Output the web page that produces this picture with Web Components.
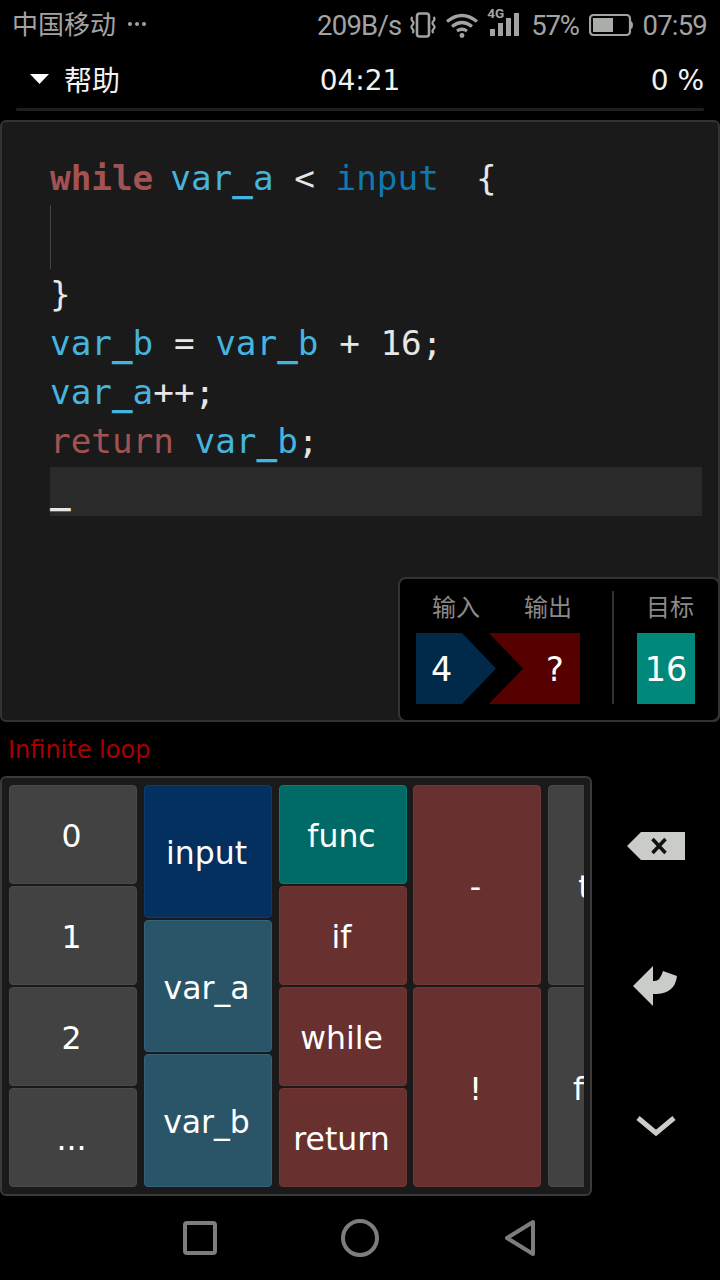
<!DOCTYPE html>
<html lang="zh"><head><meta charset="utf-8"><title>Code game</title>
<style>
html,body{margin:0;padding:0;background:#000;}
body{width:720px;height:1280px;overflow:hidden;display:flex;flex-direction:column;font-family:"DejaVu Sans","Noto Sans CJK SC",sans-serif;color:#fff;}
</style></head><body>
<status-bar></status-bar>
<top-header></top-header>
<code-editor></code-editor>
<error-line>Infinite loop</error-line>
<div style="display:flex;height:420px">
  <key-palette></key-palette>
  <side-actions></side-actions>
</div>
<nav-bar></nav-bar>
<script>
function def(name, html){
  customElements.define(name, class extends HTMLElement{
    constructor(){super();this.attachShadow({mode:'open'}).innerHTML=html;}
  });
}
def('status-bar',`<style>
:host{display:flex;align-items:center;height:50px;flex:none;box-sizing:border-box;padding:0 13px 0 13px;color:#a3a3a3;font:27.5px Roboto,"Noto Sans CJK SC",sans-serif;letter-spacing:-.8px}
.c{font:26px/26px "Noto Sans CJK SC",sans-serif;letter-spacing:0;margin-top:-4px;margin-left:-1px}
.d{margin-left:12px;display:flex;gap:3px;margin-top:-2px}
.d i{width:4px;height:4px;border-radius:50%;background:#a3a3a3;display:block}
.sp{flex:1}
svg{display:block;flex:none}
</style>
<span class="c">中国移动</span><span class="d"><i></i><i></i><i></i></span><span class="sp"></span>
<span>209B/s</span>
<svg style="margin-left:9px" width="26" height="26" viewBox="0 0 26 26" fill="none" stroke="#a3a3a3"><rect x="7" y="1.500" width="12" height="23" rx="2.500" stroke-width="2.600"/><path d="M2.500 5q-2 2 0 4t0 4 0 4 0 4M23.500 5q2 2 0 4t0 4 0 4 0 4" stroke-width="2.200"/></svg>
<svg style="margin-left:9px" width="34" height="26" viewBox="0 0 34 26" fill="none" stroke="#a3a3a3" stroke-width="3.200"><path d="M2 9.500q15-12 30 0M7 14.500q10-8 20 0M12 19q5-3.500 10 0"/><circle cx="17" cy="23.500" r="2.400" fill="#a3a3a3" stroke="none"/></svg>
<span style="margin-left:8px;position:relative;width:33px;height:36px;display:block;flex:none;letter-spacing:0">
<span style="position:absolute;left:0;top:0;font:bold 13.500px/12px Roboto,sans-serif">4G</span>
<svg style="position:absolute;left:0;top:0" width="33" height="36" viewBox="0 0 33 36" fill="#a3a3a3"><rect x="3" y="22" width="5" height="7"/><rect x="11" y="16" width="5" height="13"/><rect x="19" y="11" width="5" height="18"/><rect x="27" y="6" width="5" height="23"/></svg></span>
<span style="margin-left:11px;letter-spacing:-1.300px">57%</span>
<svg style="margin-left:10px" width="44" height="24" viewBox="0 0 44 24"><rect x="1" y="2" width="40" height="20" rx="3.500" fill="none" stroke="#a3a3a3" stroke-width="2.200"/><rect x="4" y="5" width="20" height="14" fill="#a9aea8"/><path d="M42 8q2 1 2 4t-2 4z" fill="#a3a3a3"/></svg>
<span style="margin-left:10px">07:59</span>`);
def('top-header',`<style>
:host{display:block;flex:none;height:70px;box-sizing:border-box;padding:0 16px}
.r{height:58px;display:grid;grid-template-columns:1fr auto 1fr;align-items:center;font:28px "DejaVu Sans","Noto Sans CJK SC",sans-serif;color:#f2f2f2}
.n{padding-top:2px}
.l{display:flex;align-items:center;gap:15px;padding-left:14px}
.l span{font:28px "Noto Sans CJK SC",sans-serif}
.p{text-align:right}
.bar{height:3px;background:#1f1f1f;border-radius:2px}
svg{display:block}
</style><div class="r"><div class="l"><svg width="19" height="10" viewBox="0 0 19 10"><path d="M0 0h19L9.500 10z" fill="#fff"/></svg><span>帮助</span></div><div class="n">04:21</div><div class="p n">0 %</div></div><div class="bar"></div>`);
def('code-editor',`<style>
:host{display:block;flex:none;position:relative;height:602px;box-sizing:border-box;background:#1a1a1a;border:2px solid #333;border-radius:6px;padding:33px 16px 0 48px;font:34.3px/47px "DejaVu Sans Mono",monospace;color:#e6e6e6}
.ln{height:49px;white-space:pre}
.ln:first-of-type{height:50px}
.k{color:#a25252}.v{color:#45b4de}.i{color:#0e79b2}
.u{text-shadow:0 1px 0 currentColor,0 -1px 0 currentColor}
.w{font-weight:bold;margin-right:-3.600px}
.sh{margin-left:-4px}
.blk{height:64px;border-left:1px solid #444;margin-bottom:2px}
.cur{background:#2a2a2a}
</style>
<div class="ln"><span class="k w">while</span> <span class="v">var<span class="u">_</span>a</span> &lt; <span class="i">input</span>  <span class="sh">{</span></div>
<div class="blk"></div>
<div class="ln">}</div>
<div class="ln"><span class="v">var<span class="u">_</span>b</span> = <span class="v">var<span class="u">_</span>b</span> + 16;</div>
<div class="ln"><span class="v">var<span class="u">_</span>a</span>++;</div>
<div class="ln"><span class="k">return</span> <span class="v">var<span class="u">_</span>b</span>;</div>
<div class="ln cur"><span class="u">_</span></div>
<io-panel></io-panel>`);
def('io-panel',`<style>
:host{position:absolute;right:-2px;bottom:-2px;width:322px;height:145px;box-sizing:border-box;background:#000;border:2px solid #333;border-radius:8px;display:flex;padding:12px 0 16px 16px;font-family:"DejaVu Sans","Noto Sans CJK SC",sans-serif}
.lab{font:24px/30px "Noto Sans CJK SC",sans-serif;color:#8a8a8a;height:32px;margin-bottom:10px;white-space:nowrap}
.g{width:164px}
.ls{display:flex;gap:44px;padding-left:16px}
.arrows{display:flex;height:71px;font-size:33.500px;line-height:73px;color:#fff}
.a{width:80px;background:#01294a;clip-path:polygon(0 0,46px 0,100% 50%,46px 100%,0 100%);padding-left:15px;box-sizing:border-box}
.b{width:91px;margin-left:-7px;background:#570000;clip-path:polygon(0 0,100% 0,100% 100%,0 100%,34px 50%);padding-left:57px;box-sizing:border-box}
.div{width:2px;background:#333;margin-left:32px;flex:none}
.t{margin-left:23px;width:58px}
.t .lab{margin-left:9px}
.box{height:71px;background:#00897b;color:#fff;font-size:33.500px;line-height:73px;text-align:center}
</style>
<div class="g"><div class="ls"><div class="lab">输入</div><div class="lab">输出</div></div><div class="arrows"><div class="a">4</div><div class="b">?</div></div></div>
<div class="div"></div>
<div class="t"><div class="lab">目标</div><div class="box">16</div></div>`);
def('error-line',`<style>
:host{display:block;flex:none;height:54px;box-sizing:border-box;padding:14px 0 0 8px;font:24px/28px "DejaVu Sans",sans-serif;color:#a80000}
</style><slot></slot>`);
def('key-btn',`<style>
:host{display:flex;align-items:center;justify-content:center;box-sizing:border-box;width:128px;flex:1 1 0;min-height:0;border-radius:4px;background:var(--c,#424242);border:1px solid var(--e,#4a4a4a);color:#fff;font:31.500px "DejaVu Sans",sans-serif;white-space:nowrap;padding:3px 3px 0 0}
</style><slot></slot>`);
def('key-col',`<style>
:host{display:flex;flex-direction:column;gap:2px;flex:none;width:128px;height:100%}
</style><slot></slot>`);
def('key-palette',`<style>
:host{display:block;flex:none;width:592px;height:420px;box-sizing:border-box;background:#1a1a1a;border:2px solid #3a3a3a;border-radius:6px;padding:7px 6px 7px 7px}
.s{display:flex;gap:7px;height:100%;overflow:hidden}
.red{--c:#693030;--e:#733636}.teal{--c:#006a66;--e:#0b7d78}.blue{--c:#03305f;--e:#0a3d70}.var{--c:#2a5468;--e:#33627a}
.tight{margin-left:-1px}
</style>
<div class="s">
<key-col><key-btn>0</key-btn><key-btn>1</key-btn><key-btn>2</key-btn><key-btn>...</key-btn></key-col>
<key-col><key-btn class="blue">input</key-btn><key-btn class="var">var_a</key-btn><key-btn class="var">var_b</key-btn></key-col>
<key-col><key-btn class="teal">func</key-btn><key-btn class="red">if</key-btn><key-btn class="red">while</key-btn><key-btn class="red">return</key-btn></key-col>
<key-col class="tight"><key-btn class="red">-</key-btn><key-btn class="red">!</key-btn></key-col>
<key-col><key-btn>true</key-btn><key-btn>false</key-btn></key-col>
</div>`);
def('side-actions',`<style>
:host{flex:1;display:block;position:relative}
.w{display:flex;flex-direction:column;align-items:center;height:100%;padding:56px 0 0 0;box-sizing:border-box;margin-left:-1px}
svg{display:block}
</style><div class="w">
<svg width="58" height="28" viewBox="0 0 58 28"><path d="M0 14L14 0h44v28H14z" fill="#c9ccc7"/><path d="M25.500 7l13 14M38.500 7l-13 14" stroke="#111" stroke-width="3.500" fill="none"/></svg>
<svg style="margin-top:106px" width="46" height="40" viewBox="0 0 46 40"><path d="M0 20L20 0V15Q27 16 30 5L44 10Q42 27 24 28H20V40Z" fill="#c9ccc7"/></svg>
<svg style="margin-top:109px" width="40" height="22" viewBox="0 0 40 22"><path d="M2 3l18 15L38 3" fill="none" stroke="#c9ccc7" stroke-width="5"/></svg>
</div>`);
def('nav-bar',`<style>
:host{display:block;flex:1;position:relative}
svg{position:absolute;left:0;top:0}
</style><svg width="720" height="84" viewBox="0 0 720 84" fill="none" stroke="#7b7f7b" stroke-width="4" stroke-linejoin="round"><rect x="185" y="27" width="30" height="30" rx="2"/><circle cx="360" cy="42" r="17"/><path d="M507 42L533 26V58z"/></svg>`);
</script>
</body></html>
